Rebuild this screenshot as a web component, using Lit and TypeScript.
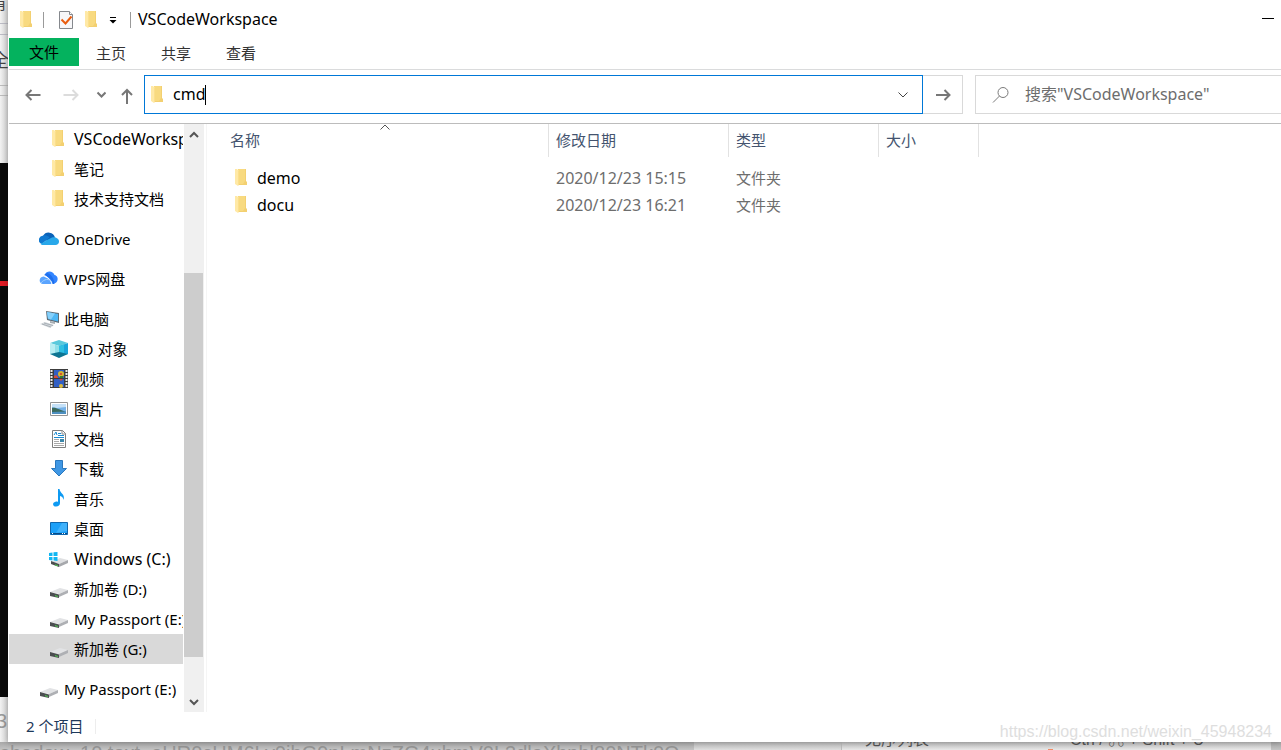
import { LitElement, html, svg, css, nothing } from "lit";
import { customElement, property, state } from "lit/decorators.js";
import { classMap } from "lit/directives/class-map.js";

const folder = svg`
  <path d="M6 1h8v12l1 1v3H6z" fill="#f3d071"/>
  <path d="M6 1h7v12l-2 3H6z" fill="#f8da80"/>
  <path d="M3 1h2l2 2v13l-1 2-3-2z" fill="#ffe9a6"/>
  <path d="M7 3v13l-1 2V3z" fill="#fbdf8c"/>`;

const drive = svg`
  <path d="M1 13l10-4 8 2-9 4z" fill="#e2e3e5"/>
  <path d="M10 15l9-4v3l-9 4z" fill="#aeb0b4"/>
  <path d="M1 13l9 2.500V19l-9-2z" fill="#4b4e50"/>
  <path d="M6 16l3 1v1l-3-.8z" fill="#4fc04f"/>`;

const icons: Record<string, unknown> = {
  folder,
  drive,
  onedrive: svg`
    <path d="M4 7a6.500 6.500 0 0 1 12 1.500l-6 4-6-2z" fill="#0a62b8"/>
    <path d="M4.500 6.500c2.500-.6 4.500.5 6 2L3 15c-5-1-4-8 1.500-8.500z" fill="#1079d0"/>
    <path d="M9 10.500l4-2c3-1 7 .8 7 4 0 2-1.500 3.500-3.500 3.500H4c-1 0-2-.5-2.500-1z" fill="#28a8ea"/>`,
  wps: svg`
    <path d="M6 5.500c1-4 8-4.500 9.500.5 3 .5 4 4 2.500 6.500-.7 1.300-2 2-3.500 2z" fill="#3385ff"/>
    <path d="M8 4c4 1 7 5 7.500 11H13C12 10 9 7 5 6z" fill="#1d6fee"/>
    <path d="M4.500 7.500c4 .5 7.500 4 8 7.500H4c-4.500-.5-4.500-7 .5-7.500z" fill="#5aa4ff"/>
    <path d="M5.500 7.500c4 1 7 4 7.500 7.500" fill="none" stroke="#fff"/>
    <path d="M2 14c3-4 8-5 11-1" fill="none" stroke="#9accff"/>`,
  pc: svg`
    <path d="M7 2l13 2v10L8 11z" fill="#5f6d78"/>
    <path d="M8 3l11 2v7.500L9 10z" fill="#4eb7f5"/>
    <path d="M8 3l8 1.500-4 6-3-1z" fill="#85d0fb"/>
    <path d="M11 12l5 1v2l-5-1z" fill="#a7adb2"/>
    <path d="M1 15l5-2 9 3-4 3z" fill="#d5dade"/>
    <path d="M3 15l9 3M5 14l9 2.500" stroke="#aab1b7"/>`,
  cube: svg`
    <path d="M1 4l9-3 9 3-9 3z" fill="#59c9dc"/>
    <path d="M1 4l9 3v9l-9-1z" fill="#b8eef3"/>
    <path d="M6 5.700L10 7v7l-4 1z" fill="#8fdfe8"/>
    <path d="M10 7l9-3v11l-9 2z" fill="#1aa5da"/>
    <path d="M10 7l5-1.600V14l-5-1z" fill="#2fc0e2"/>
    <path d="M1 15l9-2 9 2-9 4z" fill="#0d7592"/>`,
  video: svg`
    <path d="M1 0h18v19H1z" fill="#3c3c3c"/>
    <path d="M2.500 1v18M17.500 1v18" stroke="#e8e8e8" stroke-width="2" stroke-dasharray="2 1"/>
    <path d="M5 1h10v8H5zM5 10h10v8H5z" fill="#315fc4"/>
    <circle cx="12" cy="5" r="3" fill="#d5b432"/><circle cx="12" cy="5" r="1" fill="#d5352b"/>
    <path d="M5 7l2-1 2 2v1H5zM10 10h4l-2 2z" fill="#d64b3b"/>
    <circle cx="12" cy="17" r="2" fill="#ddbb3d"/>
    <path d="M11 7h3v2h-3z" fill="#377b2e"/>`,
  picture: svg`
    <path d="M1.500 3.500h17v13h-17z" fill="#fff" stroke="#949494"/>
    <path d="M3 5h14v10H3z" fill="#76b2e8"/>
    <path d="M3 5h14v3L8 9 3 8z" fill="#c4e0f7"/>
    <path d="M3 9c3-1 6 1 14 4v1H3z" fill="#3b6a5e"/>
    <path d="M3 13l14-.5V15H3z" fill="#4d8fc0"/>`,
  document: svg`
    <path d="M3.500 1.500h10l3 3v14h-13z" fill="#fff" stroke="#7e7e7e"/>
    <path d="M13 1v4h4" fill="none" stroke="#8c8c8c"/>
    <path d="M5 6l2-3 1 3" fill="none" stroke="#1c8bd0"/>
    <path d="M9 4.500h3M9 6.500h6M5 8.500h10" stroke="#1c8bd0"/>
    <path d="M11 10h4v3h-4z" fill="#3b87aa"/>
    <path d="M5 10.500h5M5 12.500h5M5 14.500h10M5 16.500h10" stroke="#a9a9a9"/>`,
  download: svg`<path d="M6.500 1.500h7v8h4L10 17 2.500 9.500h4z" fill="#3f97e4" stroke="#2a78be"/>`,
  music: svg`
    <path d="M9 0h1.500c.5 4.500 6 5 4 11-.3-2.500-1.500-3.500-3.500-4v7c0 2-1.500 3.500-4 3.500-3.500 0-4-4-.5-4.800 1-.2 1.800-.1 2.500.2z" fill="#0e9af2"/>`,
  desktop: svg`
    <path d="M1.500 3.500h17v12h-17z" fill="#1ca0f8" stroke="#1067ae"/>
    <path d="M13 4h5v8L7 14z" fill="#3fb1fb"/>
    <path d="M2 14.500h16" stroke="#074a86"/>
    <path d="M3 14.500h1M13 14.500h4" stroke="#fff" stroke-dasharray="1 1"/>`,
  windows: svg`
    <path d="M2 13l9-4 8 2-9 4z" fill="#dfe0e2"/>
    <path d="M10 15l9-4v3l-9 4z" fill="#a6a8ac"/>
    <path d="M2 12l8 3v3l-8-3z" fill="#4b4e50"/>
    <path d="M6 15.200l3 1v1l-3-.8z" fill="#4fc04f"/>
    <path d="M0 4l3.500-.5V7H0zM4.500 3.300L8.500 3v4h-4zM0 8h3.500v3.500L0 11zM4.500 8h4v4l-4-.4z" fill="#10b6f2"/>`,
};

interface Place {
  label: string;
  icon: string;
  level: 1 | 2;
  gap?: boolean;
  current?: boolean;
}

const places: Place[] = [
  { label: "VSCodeWorkspace", icon: "folder", level: 2 },
  { label: "笔记", icon: "folder", level: 2 },
  { label: "技术支持文档", icon: "folder", level: 2 },
  { label: "OneDrive", icon: "onedrive", level: 1, gap: true },
  { label: "WPS网盘", icon: "wps", level: 1, gap: true },
  { label: "此电脑", icon: "pc", level: 1, gap: true },
  { label: "3D 对象", icon: "cube", level: 2 },
  { label: "视频", icon: "video", level: 2 },
  { label: "图片", icon: "picture", level: 2 },
  { label: "文档", icon: "document", level: 2 },
  { label: "下载", icon: "download", level: 2 },
  { label: "音乐", icon: "music", level: 2 },
  { label: "桌面", icon: "desktop", level: 2 },
  { label: "Windows (C:)", icon: "windows", level: 2 },
  { label: "新加卷 (D:)", icon: "drive", level: 2 },
  { label: "My Passport (E:)", icon: "drive", level: 2 },
  { label: "新加卷 (G:)", icon: "drive", level: 2, current: true },
  { label: "My Passport (E:)", icon: "drive", level: 1, gap: true },
];

const files = [
  { name: "demo", date: "2020/12/23 15:15", type: "文件夹" },
  { name: "docu", date: "2020/12/23 16:21", type: "文件夹" },
];

const isPlainName = (text: string) => /^[A-Za-z ]+(\(C:\))?$/.test(text);

const base = css`
  * {
    box-sizing: border-box;
  }
  svg {
    display: block;
    flex: none;
  }
  button,
  input {
    font: inherit;
    color: inherit;
    border: 0;
    padding: 0;
    margin: 0;
    background: none;
    outline: none;
  }
  button {
    display: flex;
    align-items: center;
    justify-content: center;
  }
  a {
    color: inherit;
    text-decoration: none;
  }
`;

@customElement("shell-icon")
export class ShellIcon extends LitElement {
  @property() name = "folder";
  static styles = css`
    :host {
      display: block;
      flex: none;
      width: 20px;
      height: 20px;
    }
    svg {
      display: block;
    }
  `;
  render() {
    return html`<svg width="20" height="20" viewBox="0 0 20 20" aria-hidden="true">${icons[this.name]}</svg>`;
  }
}

@customElement("title-bar")
export class TitleBar extends LitElement {
  @property() heading = "";
  static styles = [
    base,
    css`
      .bar {
        display: flex;
        align-items: center;
        height: 38px;
        padding: 2px 0 0 8px;
      }
      .divider {
        width: 1px;
        height: 16px;
        background: #9a9a9a;
      }
      .first {
        margin: 0 12px 0 6px;
      }
      .more {
        width: 22px;
        height: 20px;
        margin-right: 6px;
      }
      .gap {
        margin-left: 6px;
      }
      .heading {
        flex: 1;
        margin: 0;
        padding: 0 0 2px 7px;
        font-size: 16px;
        font-weight: 400;
      }
      .minimise {
        width: 26px;
        height: 36px;
        padding-bottom: 3px;
      }
    `,
  ];
  render() {
    return html`<header class="bar">
      <shell-icon name="folder"></shell-icon>
      <span class="divider first"></span>
      <button aria-label="属性">
        <svg width="20" height="20" viewBox="0 0 20 20">
          <path d="M3.500 1.500h10l3 3v14h-13z" fill="#f7f7f9" stroke="#85888d" />
          <path d="M13.500 1.500v3h3" fill="#fff" stroke="#85888d" />
          <path d="M5.500 9.500l4 4 6-7" fill="none" stroke="#e95d10" stroke-width="2" />
        </svg>
      </button>
      <button class="gap" aria-label="新建文件夹"><shell-icon name="folder"></shell-icon></button>
      <button class="more" aria-label="自定义快速访问工具栏">
        <svg width="8" height="8" viewBox="0 0 8 8"><path d="M1 1h6v1H1zM.5 4h7L4 7.500z" /></svg>
      </button>
      <span class="divider"></span>
      <h1 class="heading">${this.heading}</h1>
      <button class="minimise" aria-label="最小化">
        <svg width="12" height="1" viewBox="0 0 12 1"><path d="M0 0h12v1H0z" /></svg>
      </button>
    </header>`;
  }
}

@customElement("ribbon-tabs")
export class RibbonTabs extends LitElement {
  static styles = [
    base,
    css`
      .tabs {
        display: flex;
        height: 32px;
        border-bottom: 1px solid #dadbdc;
        color: #333;
      }
      .tab {
        height: 30px;
        padding: 0 18px 0 17px;
      }
      .file {
        height: 28px;
        padding: 0 20px;
        background: #04b25e;
        color: #000;
      }
    `,
  ];
  render() {
    return html`<nav class="tabs">
      <button class="tab file">文件</button>
      ${["主页", "共享", "查看"].map((t) => html`<button class="tab">${t}</button>`)}
    </nav>`;
  }
}

@customElement("address-row")
export class AddressRow extends LitElement {
  @property() folder = "";
  @state() private path = "cmd";
  static styles = [
    base,
    css`
      .row {
        display: flex;
        align-items: center;
        height: 54px;
        padding: 0 0 4px 14px;
        font-size: 16px;
        border-bottom: 1px solid #bcbcbc;
        color: #777;
      }
      .arrow {
        width: 20px;
        height: 38px;
      }
      .forward {
        margin-left: 18px;
      }
      .recent {
        margin-left: 10px;
      }
      .up {
        margin: 2px 7px 0 6px;
      }
      .address {
        display: flex;
        align-items: center;
        flex: 1;
        height: 39px;
        padding-left: 3px;
        border: 1px solid #0078d7;
        color: #000;
      }
      .path {
        field-sizing: content;
        margin-left: 5px;
        height: 30px;
        padding-bottom: 2px;
        caret-color: transparent;
      }
      .caret {
        width: 1px;
        height: 20px;
        background: #000;
      }
      .history {
        width: 38px;
        height: 37px;
        margin-left: auto;
      }
      .go {
        width: 40px;
        height: 39px;
        border: 1px solid #d9d9d9;
        border-left: 0;
      }
      .search {
        display: flex;
        align-items: center;
        flex: 0 1 306px;
        height: 39px;
        margin-left: 12px;
        padding-left: 16px;
        border: 1px solid #d9d9d9;
        border-right: 0;
      }
      .query {
        flex: 1;
        min-width: 0;
        height: 30px;
        margin-left: 15px;
        padding-bottom: 2px;
      }
      .query::placeholder {
        color: #6d6d6d;
        opacity: 1;
      }
    `,
  ];
  render() {
    return html`<div class="row">
      <button class="arrow" aria-label="后退">
        <svg width="16" height="12" viewBox="0 0 16 12" fill="none" stroke="#777" stroke-width="2">
          <path d="M15.500 6H1.500M6.500 1L1.500 6l5 5" />
        </svg>
      </button>
      <button class="arrow forward" aria-label="前进" disabled>
        <svg width="16" height="12" viewBox="0 0 16 12" fill="none" stroke="#dcdcdc" stroke-width="2">
          <path d="M.5 6h14M9.500 1l5 5-5 5" />
        </svg>
      </button>
      <button class="arrow recent" aria-label="最近浏览的位置">
        <svg width="10" height="7" viewBox="0 0 10 7" fill="none" stroke="#777" stroke-width="2">
          <path d="M1.500 1.500l4 4 4-4" />
        </svg>
      </button>
      <button class="arrow up" aria-label="上移">
        <svg width="12" height="16" viewBox="0 0 12 16" fill="none" stroke="#777" stroke-width="2">
          <path d="M6 16V2M1 7l5-5 5 5" />
        </svg>
      </button>
      <label class="address">
        <shell-icon name="folder"></shell-icon>
        <input
          class="path"
          aria-label="地址"
          .value=${this.path}
          size="3"
          @input=${(e: InputEvent) => (this.path = (e.target as HTMLInputElement).value)}
        />
        <span class="caret"></span>
        <button class="history" aria-label="以前的位置">
          <svg width="10" height="6" viewBox="0 0 10 6" fill="none" stroke="#444"><path d="M.5.5L5 5 9.500.5" /></svg>
        </button>
      </label>
      <button class="go" aria-label="转到">
        <svg width="16" height="12" viewBox="0 0 16 12" fill="none" stroke="#777" stroke-width="2">
          <path d="M1 6h13M9.500 1l5 5-5 5" />
        </svg>
      </button>
      <label class="search">
        <svg width="18" height="16" viewBox="0 0 18 16" fill="none" stroke="#7a7a7a">
          <circle cx="11" cy="5.500" r="5" />
          <path d="M7.500 9L1 15.500" />
        </svg>
        <input class="query" type="text" aria-label="搜索" placeholder=${`搜索"${this.folder}"`} />
      </label>
    </div>`;
  }
}

@customElement("place-list")
export class PlaceList extends LitElement {
  static styles = [
    base,
    css`
      :host {
        display: flex;
        flex: none;
        width: 195px;
      }
      .list {
        flex: 1;
        min-width: 0;
        margin: 0;
        padding: 0;
        list-style: none;
        overflow: hidden;
      }
      .place {
        display: flex;
        align-items: center;
        gap: 5px;
        height: 30px;
        padding-left: 40px;
        white-space: nowrap;
        overflow: hidden;
        color: #000;
      }
      .plain {
        font-size: 16px;
      }
      .root {
        padding-left: 30px;
        font-size: 15px;
      }
      .gap {
        margin-top: 10px;
      }
      .current {
        background: #d9d9d9;
      }
      .scroll {
        display: flex;
        flex-direction: column;
        flex: none;
        width: 20px;
        margin-left: 1px;
        background: #f0f0f0;
      }
      .step {
        height: 20px;
      }
      .track {
        display: grid;
        flex: 1;
        grid-template-rows: 129fr 384fr 35fr;
      }
      .thumb {
        grid-row: 2;
        width: 19px;
        background: #cdcdcd;
      }
    `,
  ];
  render() {
    return html`<ul class="list">
        ${places.map(
          (p) => html`<li class=${classMap({ gap: !!p.gap })}>
            <a
              href="#"
              aria-current=${p.current ? "true" : nothing}
              class=${classMap({ place: true, plain: isPlainName(p.label), root: p.level === 1, current: !!p.current })}
              ><shell-icon name=${p.icon}></shell-icon><span>${p.label}</span></a
            >
          </li>`,
        )}
      </ul>
      <div class="scroll">
        <button class="step" aria-label="向上滚动">
          <svg width="10" height="7" viewBox="0 0 10 7" fill="none" stroke="#555" stroke-width="2">
            <path d="M1 6l4-4 4 4" />
          </svg>
        </button>
        <div class="track"><div class="thumb"></div></div>
        <button class="step" aria-label="向下滚动">
          <svg width="10" height="7" viewBox="0 0 10 7" fill="none" stroke="#555" stroke-width="2">
            <path d="M1 1l4 4 4-4" />
          </svg>
        </button>
      </div>`;
  }
}

@customElement("file-table")
export class FileTable extends LitElement {
  static styles = [
    base,
    css`
      :host {
        display: block;
        flex: 1;
        min-width: 0;
        margin-left: 2px;
        border-left: 1px solid #f5f5f5;
      }
      .files {
        border-collapse: separate;
        border-spacing: 0;
        table-layout: fixed;
        width: 772px;
      }
      .name {
        width: 342px;
      }
      .date {
        width: 180px;
      }
      .kind {
        width: 150px;
      }
      .size {
        width: 100px;
      }
      .head {
        position: relative;
        height: 33px;
        padding: 0 0 2px 7px;
        border-right: 1px solid #e2e2e2;
        color: #44546f;
        font-weight: 400;
        text-align: left;
      }
      .head.name {
        padding-left: 23px;
      }
      .sort {
        position: absolute;
        left: 50%;
        top: 0;
        margin-left: 2px;
      }
      .space {
        height: 8px;
      }
      .cell {
        height: 27px;
        padding: 0 0 2px 7px;
        color: #6d6d6d;
      }
      .entry {
        display: flex;
        align-items: center;
        gap: 5px;
        padding-left: 18px;
        color: #000;
        font-size: 16px;
      }
      .when {
        font-size: 16px;
      }
    `,
  ];
  render() {
    return html`<table class="files">
      <thead>
        <tr>
          <th class="head name">
            名称
            <svg class="sort" width="10" height="6" viewBox="0 0 10 6" fill="none" stroke="#555">
              <path d="M.5 5.500L5 1l4.500 4.500" />
            </svg>
          </th>
          <th class="head date">修改日期</th>
          <th class="head kind">类型</th>
          <th class="head size">大小</th>
        </tr>
      </thead>
      <tbody>
        <tr class="space"></tr>
        ${files.map(
          (f) => html`<tr>
            <td class="cell"><a class="entry" href="#"><shell-icon name="folder"></shell-icon>${f.name}</a></td>
            <td class="cell when">${f.date}</td>
            <td class="cell">${f.type}</td>
            <td class="cell"></td>
          </tr>`,
        )}
      </tbody>
    </table>`;
  }
}

/* The pages that lie behind the window and show along its left and bottom edges. */
@customElement("page-behind")
export class PageBehind extends LitElement {
  static styles = css`
    :host {
      position: absolute;
      inset: 0;
      overflow: hidden;
      background: #c9c9c9;
      color: #a0a0a0;
      font-size: 20px;
      line-height: 24px;
      white-space: nowrap;
    }
    div {
      box-sizing: border-box;
    }
    .edge {
      position: absolute;
      inset: 0 auto 0 0;
      width: 8px;
      display: flex;
      flex-direction: column;
      overflow: hidden;
      background: linear-gradient(90deg, #f2f2f2, #d4d4d4);
    }
    .bar {
      height: 12px;
      margin-top: 23px;
      border: solid #bbbbc4;
      border-width: 1px 0;
    }
    .rule {
      height: 11px;
      margin-top: 50px;
      border: solid #bbb;
      border-width: 1px 0;
    }
    .video {
      height: 534px;
      margin-top: 67px;
      padding-top: 118px;
      background: #0a0a0a;
    }
    .progress {
      height: 5px;
      background: #e01b24;
    }
    .glyph {
      position: absolute;
      color: #454545;
      font-size: 16px;
    }
    .g1 {
      left: -9px;
      top: -9px;
    }
    .g2 {
      left: -9px;
      top: 48px;
      font-size: 18px;
    }
    .g3 {
      left: -4px;
      top: 709px;
      color: #999;
      font-family: "Liberation Sans", sans-serif;
      font-size: 20px;
    }
    .foot {
      position: absolute;
      inset: auto 0 0 0;
      height: 8px;
      overflow: hidden;
      background: linear-gradient(#a8a8a8, #c4c4c4);
      font-family: "Liberation Sans", "Noto Sans CJK SC", sans-serif;
    }
    .panel {
      position: absolute;
      inset: 0 10px 0 694px;
      background: linear-gradient(#b8b8b8, #dedede);
    }
    .side {
      position: absolute;
      inset: 0 10px 0 841px;
      border-left: 1px solid #bbb;
      background: linear-gradient(#bcbcbc, #e8e8e8);
    }
    .code {
      position: absolute;
      left: 0;
      top: -1px;
      color: #949494;
    }
    .hint {
      position: absolute;
      top: -14px;
      left: 865px;
      color: #555;
      font-size: 16px;
    }
    .keys {
      left: 1070px;
    }
    .dot {
      position: absolute;
      left: 1048px;
      bottom: 0;
      width: 5px;
      height: 1px;
      background: #f48a64;
    }
  `;
  render() {
    return html`<div class="edge">
        <div class="bar"></div>
        <div class="rule"></div>
        <div class="video"><div class="progress"></div></div>
        <span class="glyph g1">有</span>
        <span class="glyph g2">全</span>
        <span class="glyph g3">3</span>
      </div>
      <div class="foot">
        <div class="panel"></div>
        <div class="side"></div>
        <span class="code">shadow_10,text_aHR0cHM6Ly9ibG9nLmNzZG4ubmV0L3dlaXhpbl80NTk0O</span>
        <span class="hint">无序列表</span>
        <span class="hint keys">Ctrl / ⌘ + Shift + U</span>
        <span class="dot"></span>
      </div>`;
  }
}

@customElement("app-root")
export class AppRoot extends LitElement {
  static styles = [
    base,
    css`
      :host {
        display: flex;
        position: relative;
        box-sizing: border-box;
        min-height: 100vh;
        padding: 0 0 8px 8px;
        overflow: hidden;
        font-family: "Noto Sans", "Noto Sans CJK SC", sans-serif;
        font-size: 15px;
        line-height: 20px;
        color: #000;
      }
      .window {
        display: flex;
        position: relative;
        flex-direction: column;
        flex: 1;
        min-width: 0;
        padding-left: 1px;
        background: #fff;
        box-shadow: 0 0 6px rgba(0, 0, 0, 0.3);
      }
      .body {
        display: flex;
        flex: 1;
      }
      .status {
        display: flex;
        align-items: center;
        gap: 12px;
        height: 30px;
        padding: 0 0 2px 17px;
        color: #1e395b;
      }
      .split {
        width: 1px;
        height: 15px;
        background: #ededed;
      }
      .mark {
        position: absolute;
        right: 9px;
        bottom: 9px;
        color: #dedede;
        font: 16px/18px "Liberation Sans", sans-serif;
      }
    `,
  ];
  render() {
    return html`<page-behind></page-behind>
      <main class="window">
        <title-bar heading="VSCodeWorkspace"></title-bar>
        <ribbon-tabs></ribbon-tabs>
        <address-row folder="VSCodeWorkspace"></address-row>
        <div class="body">
          <place-list></place-list>
          <file-table></file-table>
        </div>
        <footer class="status"><span>2 个项目</span><span class="split"></span></footer>
      </main>
      <span class="mark">https://blog.csdn.net/weixin_45948234</span>`;
  }
}
